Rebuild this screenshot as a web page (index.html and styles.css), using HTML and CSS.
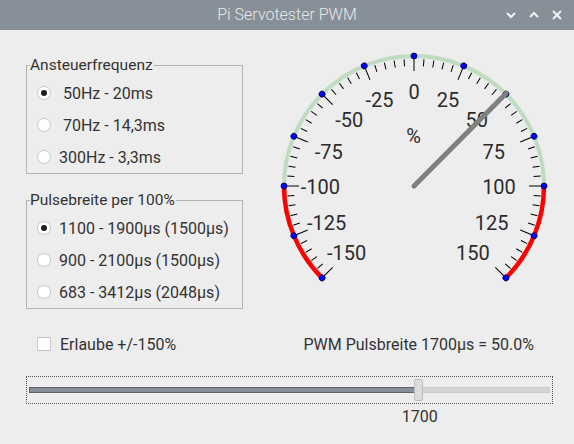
FILE: index.html
```html
<!DOCTYPE html>
<html lang="de">
<head>
<meta charset="utf-8">
<title>Pi Servotester PWM</title>
<link rel="stylesheet" href="styles.css">
</head>
<body>
<div class="window">
  <header class="titlebar">
    <span></span>
    <span class="title">Pi Servotester PWM</span>
    <span class="wm-buttons">
      <svg class="wm-icon" viewBox="0 0 12 12"><polyline points="2,4 6,8 10,4"/></svg>
      <svg class="wm-icon" viewBox="0 0 12 12"><polyline points="2,8 6,4 10,8"/></svg>
      <svg class="wm-icon" viewBox="0 0 12 12"><line x1="2" y1="2" x2="10" y2="10"/><line x1="10" y1="2" x2="2" y2="10"/></svg>
    </span>
  </header>

  <div class="main">
    <div class="left">
      <div class="group">
        <span class="group-title">Ansteuerfrequenz</span>
        <label class="row"><span class="radio checked"></span><span>&nbsp;50Hz - 20ms</span></label>
        <label class="row"><span class="radio"></span><span>&nbsp;70Hz - 14,3ms</span></label>
        <label class="row"><span class="radio"></span><span>300Hz - 3,3ms</span></label>
      </div>
      <div class="group">
        <span class="group-title">Pulsebreite per 100%</span>
        <label class="row"><span class="radio checked"></span><span>1100 - 1900µs (1500µs)</span></label>
        <label class="row"><span class="radio"></span><span>900 - 2100µs (1500µs)</span></label>
        <label class="row"><span class="radio"></span><span>683 - 3412µs (2048µs)</span></label>
      </div>
    </div>

    <svg class="gauge" width="290" height="250" viewBox="0 0 290 250">
      <defs>
        <line id="mt" x1="0" y1="-127" x2="0" y2="-120"/>
        <line id="Mt" x1="0" y1="-130" x2="0" y2="-115"/>
        <circle id="dot" cx="0" cy="-130" r="3"/>
      </defs>
      <g transform="translate(144 146)">
        <path class="arc-ok" d="M -130 0 A 130 130 0 0 1 130 0"/>
        <path class="arc-bad" d="M 130 0 A 130 130 0 0 1 91.92 91.92"/>
        <path class="arc-bad" d="M -130 0 A 130 130 0 0 0 -91.92 91.92"/>
        <g class="ticks">
          <use href="#mt" transform="rotate(4.5)"/><use href="#mt" transform="rotate(9)"/><use href="#mt" transform="rotate(13.5)"/><use href="#mt" transform="rotate(18)"/>
          <use href="#mt" transform="rotate(27)"/><use href="#mt" transform="rotate(31.5)"/><use href="#mt" transform="rotate(36)"/><use href="#mt" transform="rotate(40.5)"/>
          <use href="#mt" transform="rotate(49.5)"/><use href="#mt" transform="rotate(54)"/><use href="#mt" transform="rotate(58.5)"/><use href="#mt" transform="rotate(63)"/>
          <use href="#mt" transform="rotate(72)"/><use href="#mt" transform="rotate(76.5)"/><use href="#mt" transform="rotate(81)"/><use href="#mt" transform="rotate(85.5)"/>
          <use href="#mt" transform="rotate(94.5)"/><use href="#mt" transform="rotate(99)"/><use href="#mt" transform="rotate(103.5)"/><use href="#mt" transform="rotate(108)"/>
          <use href="#mt" transform="rotate(117)"/><use href="#mt" transform="rotate(121.5)"/><use href="#mt" transform="rotate(126)"/><use href="#mt" transform="rotate(130.5)"/>
          <use href="#mt" transform="rotate(-4.5)"/><use href="#mt" transform="rotate(-9)"/><use href="#mt" transform="rotate(-13.5)"/><use href="#mt" transform="rotate(-18)"/>
          <use href="#mt" transform="rotate(-27)"/><use href="#mt" transform="rotate(-31.5)"/><use href="#mt" transform="rotate(-36)"/><use href="#mt" transform="rotate(-40.5)"/>
          <use href="#mt" transform="rotate(-49.5)"/><use href="#mt" transform="rotate(-54)"/><use href="#mt" transform="rotate(-58.5)"/><use href="#mt" transform="rotate(-63)"/>
          <use href="#mt" transform="rotate(-72)"/><use href="#mt" transform="rotate(-76.5)"/><use href="#mt" transform="rotate(-81)"/><use href="#mt" transform="rotate(-85.5)"/>
          <use href="#mt" transform="rotate(-94.5)"/><use href="#mt" transform="rotate(-99)"/><use href="#mt" transform="rotate(-103.5)"/><use href="#mt" transform="rotate(-108)"/>
          <use href="#mt" transform="rotate(-117)"/><use href="#mt" transform="rotate(-121.5)"/><use href="#mt" transform="rotate(-126)"/><use href="#mt" transform="rotate(-130.5)"/>
          <use href="#Mt" transform="rotate(0)"/>
          <use href="#Mt" transform="rotate(22.5)"/><use href="#Mt" transform="rotate(45)"/><use href="#Mt" transform="rotate(67.5)"/><use href="#Mt" transform="rotate(90)"/><use href="#Mt" transform="rotate(112.5)"/><use href="#Mt" transform="rotate(135)"/>
          <use href="#Mt" transform="rotate(-22.5)"/><use href="#Mt" transform="rotate(-45)"/><use href="#Mt" transform="rotate(-67.5)"/><use href="#Mt" transform="rotate(-90)"/><use href="#Mt" transform="rotate(-112.5)"/><use href="#Mt" transform="rotate(-135)"/>
        </g>
        <g class="dots">
          <use href="#dot" transform="rotate(0)"/>
          <use href="#dot" transform="rotate(22.5)"/><use href="#dot" transform="rotate(45)"/><use href="#dot" transform="rotate(67.5)"/><use href="#dot" transform="rotate(90)"/><use href="#dot" transform="rotate(112.5)"/><use href="#dot" transform="rotate(135)"/>
          <use href="#dot" transform="rotate(-22.5)"/><use href="#dot" transform="rotate(-45)"/><use href="#dot" transform="rotate(-67.5)"/><use href="#dot" transform="rotate(-90)"/><use href="#dot" transform="rotate(-112.5)"/><use href="#dot" transform="rotate(-135)"/>
        </g>
      </g>
      <g class="labels">
        <text x="144" y="59">0</text>
        <text x="178" y="66.5">25</text>
        <text x="206.7" y="87.3">50</text>
        <text x="223.7" y="118.7">75</text>
        <text x="229" y="153.7">100</text>
        <text x="221.7" y="189.5">125</text>
        <text x="202.8" y="219.5">150</text>
        <text x="109.5" y="66.5">-25</text>
        <text x="79.3" y="87.3">-50</text>
        <text x="58.7" y="118.7">-75</text>
        <text x="50.3" y="153.7">-100</text>
        <text x="56.5" y="189.5">-125</text>
        <text x="76.5" y="219.5">-150</text>
        <text x="143.7" y="102.7">%</text>
      </g>
      <line class="needle" x1="144" y1="146" x2="236" y2="53.5"/>
    </svg>
  </div>

  <div class="options">
    <label class="check-row"><span class="checkbox"></span><span>Erlaube +/-150%</span></label>
    <span class="status">PWM Pulsbreite 1700µs = 50.0%</span>
  </div>

  <div class="slider">
    <div class="groove">
      <div class="groove-fill" style="width: 75%">
        <span class="handle"></span>
      </div>
    </div>
  </div>
  <div class="value-row">
    <span class="value" style="margin-left: 75%">1700</span>
  </div>
</div>
</body>
</html>
```

FILE: styles.css
```css
html, body {
  margin: 0;
  padding: 0;
}

body {
  background: #ededed;
  font-family: Roboto, "Liberation Sans", sans-serif;
  font-size: 16px;
  color: #333333;
}

.window {
  width: 574px;
  height: 444px;
  overflow: hidden;
}

.titlebar {
  height: 30px;
  background: #878f98;
  display: grid;
  grid-template-columns: 1fr auto 1fr;
  align-items: center;
}

.title {
  color: #e8e8e8;
  font-size: 16px;
  font-weight: 300;
  line-height: 30px;
}

.wm-buttons {
  justify-self: end;
  display: flex;
  gap: 11px;
  padding-right: 11px;
}

.wm-icon {
  width: 12px;
  height: 12px;
  fill: none;
  stroke: #f4f4f4;
  stroke-width: 2;
}

.main {
  display: flex;
  padding: 10px 0 0 26px;
  gap: 27px;
  height: 270px;
}

.left {
  width: 217px;
  margin-top: 25px;
  display: flex;
  flex-direction: column;
  gap: 26px;
}

.group {
  position: relative;
  border: 1px solid #b4b4b4;
  padding: 11px 0 0 10px;
  height: 96px;
}

.group-title {
  position: absolute;
  top: -10px;
  left: 3px;
  background: #ededed;
  font-size: 15.5px;
  line-height: 18px;
  padding-right: 1px;
}

.row {
  display: flex;
  align-items: center;
  height: 32px;
  gap: 8px;
  white-space: nowrap;
}

.radio {
  width: 14px;
  height: 14px;
  box-sizing: border-box;
  border: 1px solid #c6c6c6;
  border-radius: 50%;
  background: #ffffff;
  display: flex;
  align-items: center;
  justify-content: center;
  flex: none;
}

.radio.checked::after {
  content: "";
  width: 6px;
  height: 6px;
  border-radius: 50%;
  background: #1e1e1e;
}

.gauge {
  flex: none;
  align-self: flex-start;
}

.arc-ok {
  fill: none;
  stroke: #c0dcc0;
  stroke-width: 4;
}

.arc-bad {
  fill: none;
  stroke: #ff0000;
  stroke-width: 4.5;
}

.ticks use {
  stroke: #000000;
  stroke-width: 1;
}

.dots use {
  fill: #0000ff;
  stroke: #000040;
  stroke-width: 0.8;
}

.labels text {
  font-family: Roboto, "Liberation Sans", sans-serif;
  font-size: 20px;
  fill: #2c2c2c;
  text-anchor: middle;
}

.needle {
  stroke: #808080;
  stroke-width: 5;
  stroke-linecap: round;
}

.options {
  display: flex;
  justify-content: space-between;
  align-items: center;
  height: 20px;
  margin-top: 24px;
  padding: 0 40px 0 37px;
}

.check-row {
  display: flex;
  align-items: center;
  gap: 9px;
}

.checkbox {
  width: 14px;
  height: 14px;
  box-sizing: border-box;
  border: 1px solid #c6c6c6;
  background: #ffffff;
}

.slider {
  margin: 22px 21px 0 26px;
  height: 28px;
  box-sizing: border-box;
  border: 1px dotted #555555;
  padding: 0 2px;
  display: flex;
  align-items: center;
}

.groove {
  flex: 1;
  height: 6px;
  box-sizing: border-box;
  background: #d4d4d4;
  border: 1px solid #cbcbcb;
  position: relative;
}

.groove-fill {
  position: relative;
  height: 6px;
  margin: -1px 0 0 -1px;
  box-sizing: border-box;
  background: #87909a;
  border: 1px solid #5c646c;
}

.handle {
  position: absolute;
  right: -6px;
  top: -9px;
  width: 9px;
  height: 22px;
  box-sizing: border-box;
  background: #dcdcdc;
  border: 1px solid #bdbdbd;
  border-radius: 2px;
}

.value-row {
  margin-left: 29px;
  width: 521px;
  height: 20px;
  margin-top: 3px;
  line-height: 20px;
}

.value {
  display: flex;
  justify-content: center;
  width: 0;
  white-space: nowrap;
}
```
